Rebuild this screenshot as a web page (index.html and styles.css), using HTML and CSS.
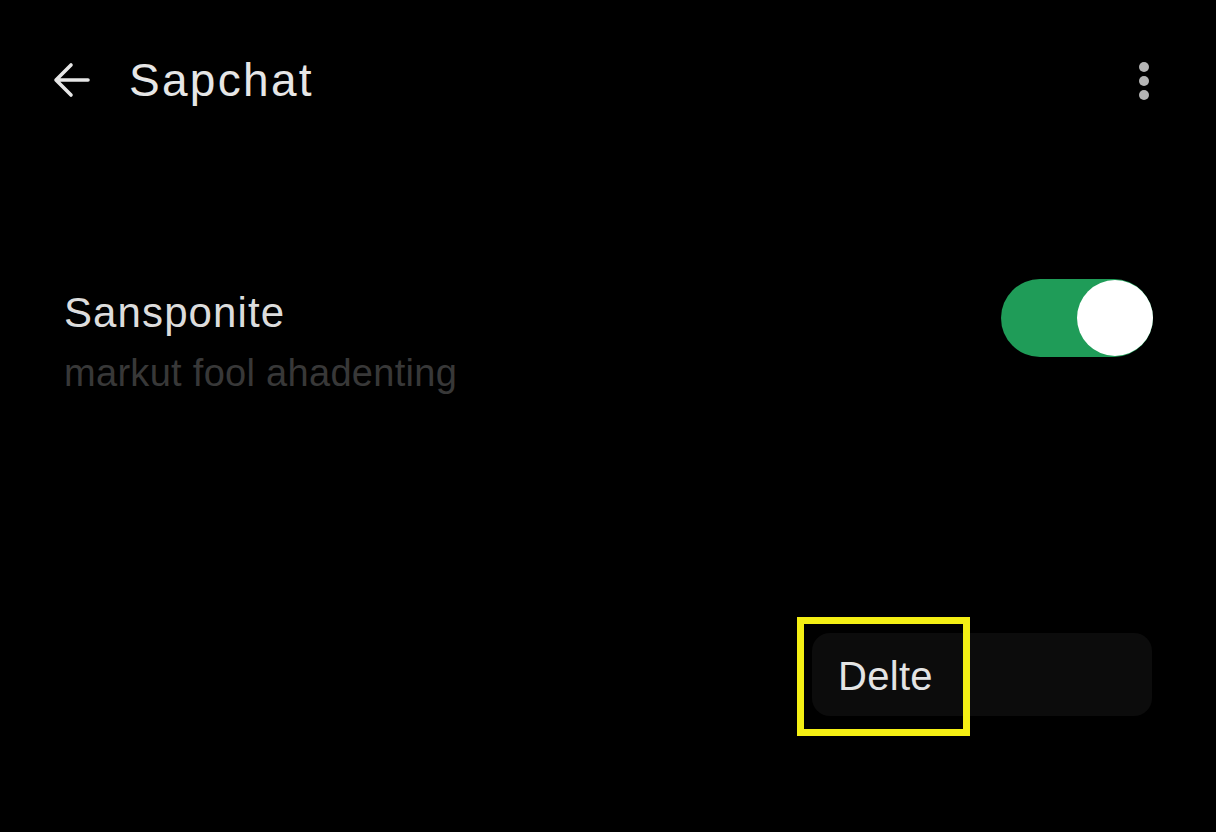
FILE: index.html
```html
<!DOCTYPE html>
<html>
<head>
<meta charset="utf-8">
<link rel="stylesheet" href="styles.css">
</head>
<body>
<div class="screen">
  <header class="topbar">
    <button class="back" aria-label="Back">
      <svg width="40" height="40" viewBox="0 0 40 40"><path d="M36 20H5M19 5L4 20l15 15" fill="none" stroke="#e6e6e6" stroke-width="3.6" stroke-linecap="round" stroke-linejoin="round"/></svg>
    </button>
    <h1 class="title">Sapchat</h1>
    <div class="more" aria-label="More"><span></span><span></span><span></span></div>
  </header>
  <section class="setting">
    <div class="setting-text">
      <div class="setting-title">Sansponite</div>
      <div class="setting-sub">markut fool ahadenting</div>
    </div>
    <div class="toggle"><div class="knob"></div></div>
  </section>
  <div class="actions">
    <div class="delete-bar">
      <span class="delete-label">Delte</span>
      <div class="highlight"></div>
    </div>
  </div>
</div>
</body>
</html>
```
FILE: styles.css
```css
html, body {
  margin: 0;
  padding: 0;
  background: #000;
}
body {
  font-family: "Liberation Sans", Arial, sans-serif;
  color: #e6e6e6;
}
.screen {
  width: 1216px;
  height: 832px;
  overflow: hidden;
  background: #000;
}
.topbar {
  display: flex;
  align-items: center;
  height: 160px;
  padding: 0 52px 0 52px;
  box-sizing: border-box;
}
.back {
  background: none;
  border: 0;
  padding: 0;
  width: 40px;
  height: 40px;
  display: flex;
}
.title {
  margin: 0 0 0 37px;
  font-size: 46px;
  font-weight: 400;
  color: #e6e6e6;
  letter-spacing: 2.3px;
  flex: 1;
}
.more {
  display: flex;
  flex-direction: column;
  gap: 4px;
  margin-right: 15px;
  margin-top: 2px;
}
.more span {
  width: 10px;
  height: 10px;
  border-radius: 50%;
  background: #b5b5b5;
}
.setting {
  display: flex;
  align-items: flex-start;
  justify-content: space-between;
  padding: 0 63px 0 64px;
  margin-top: 129px;
}
.setting-text {
  display: flex;
  flex-direction: column;
}
.setting-title {
  font-size: 42px;
  color: #dcdcdc;
  letter-spacing: 1.1px;
  line-height: 48px;
}
.setting-sub {
  font-size: 38px;
  color: #383838;
  line-height: 44px;
  margin-top: 14px;
  letter-spacing: 0.3px;
}
.toggle {
  width: 152px;
  height: 78px;
  border-radius: 39px;
  background: #1f9c58;
  display: flex;
  justify-content: flex-end;
  align-items: center;
  margin-top: -10px;
}
.knob {
  width: 76px;
  height: 76px;
  border-radius: 50%;
  background: #fff;
}
.actions {
  display: flex;
  justify-content: flex-end;
  padding-right: 64px;
  margin-top: 238px;
}
.delete-bar {
  position: relative;
  width: 340px;
  height: 83px;
  border-radius: 18px;
  background: #0c0c0c;
  display: flex;
  align-items: center;
  box-sizing: border-box;
  padding-left: 26px;
}
.delete-label {
  font-size: 40px;
  color: #e4e4e4;
  letter-spacing: 0.3px;
  margin-top: 4px;
}
.highlight {
  position: absolute;
  left: -15px;
  top: -16px;
  width: 173px;
  height: 119px;
  box-sizing: border-box;
  border: 7px solid #f4ef14;
}
```
